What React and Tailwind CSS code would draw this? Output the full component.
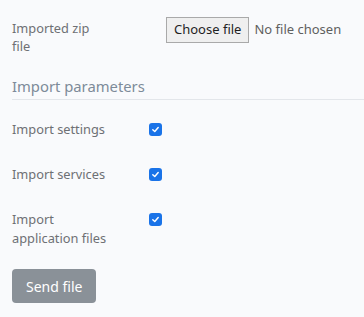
import React from "react";

function Check() {
  return (
    <span className="flex h-[13px] w-[13px] items-center justify-center rounded-[3px] bg-[#1a73e8]">
      <svg width="9" height="9" viewBox="0 0 10 10">
        <path d="M2 5.2 L4.2 7.3 L8 2.8" fill="none" stroke="white" strokeWidth="1.6" strokeLinecap="round" strokeLinejoin="round" />
      </svg>
    </span>
  );
}

function Row({ label, children }) {
  return (
    <div className="flex items-start">
      <div className="w-[137px] shrink-0 leading-[19px]">
        <div className="w-[95px]">{label}</div>
      </div>
      <div className="pt-[3px]">{children}</div>
    </div>
  );
}

export default function App() {
  return (
    <div className="min-h-[317px] w-[364px] bg-[#f9fafc] pl-3 pt-[19px] text-[12.8px] text-[#6e7074]" style={{ fontFamily: '"Noto Sans", sans-serif' }}>
      <div className="flex items-start">
        <div className="w-[154px] shrink-0 leading-[18px]">
          <div className="w-[95px]">Imported zip file</div>
        </div>
        <div className="-mt-[2px] flex items-center">
          <span className="border border-[#a9a9a9] bg-[#efefef] px-[7px] py-[2px] text-[13px] text-[#1f1f1f]">Choose file</span>
          <span className="ml-[5px] text-[13px] text-[#5f5f5f]">No file chosen</span>
        </div>
      </div>
      <div className="mt-[20px] border-b border-[#e3e6ea] pb-[2px] text-[14.8px] text-[#7d8b99]">Import parameters</div>
      <div className="mt-[20px] flex flex-col gap-[26px]">
        <Row label="Import settings"><Check /></Row>
        <Row label="Import services"><Check /></Row>
        <Row label="Import application files"><Check /></Row>
      </div>
      <button className="mt-[21px] h-[34px] rounded-[4px] bg-[#8a9198] px-[14px] text-[14px] text-white">Send file</button>
    </div>
  );
}
